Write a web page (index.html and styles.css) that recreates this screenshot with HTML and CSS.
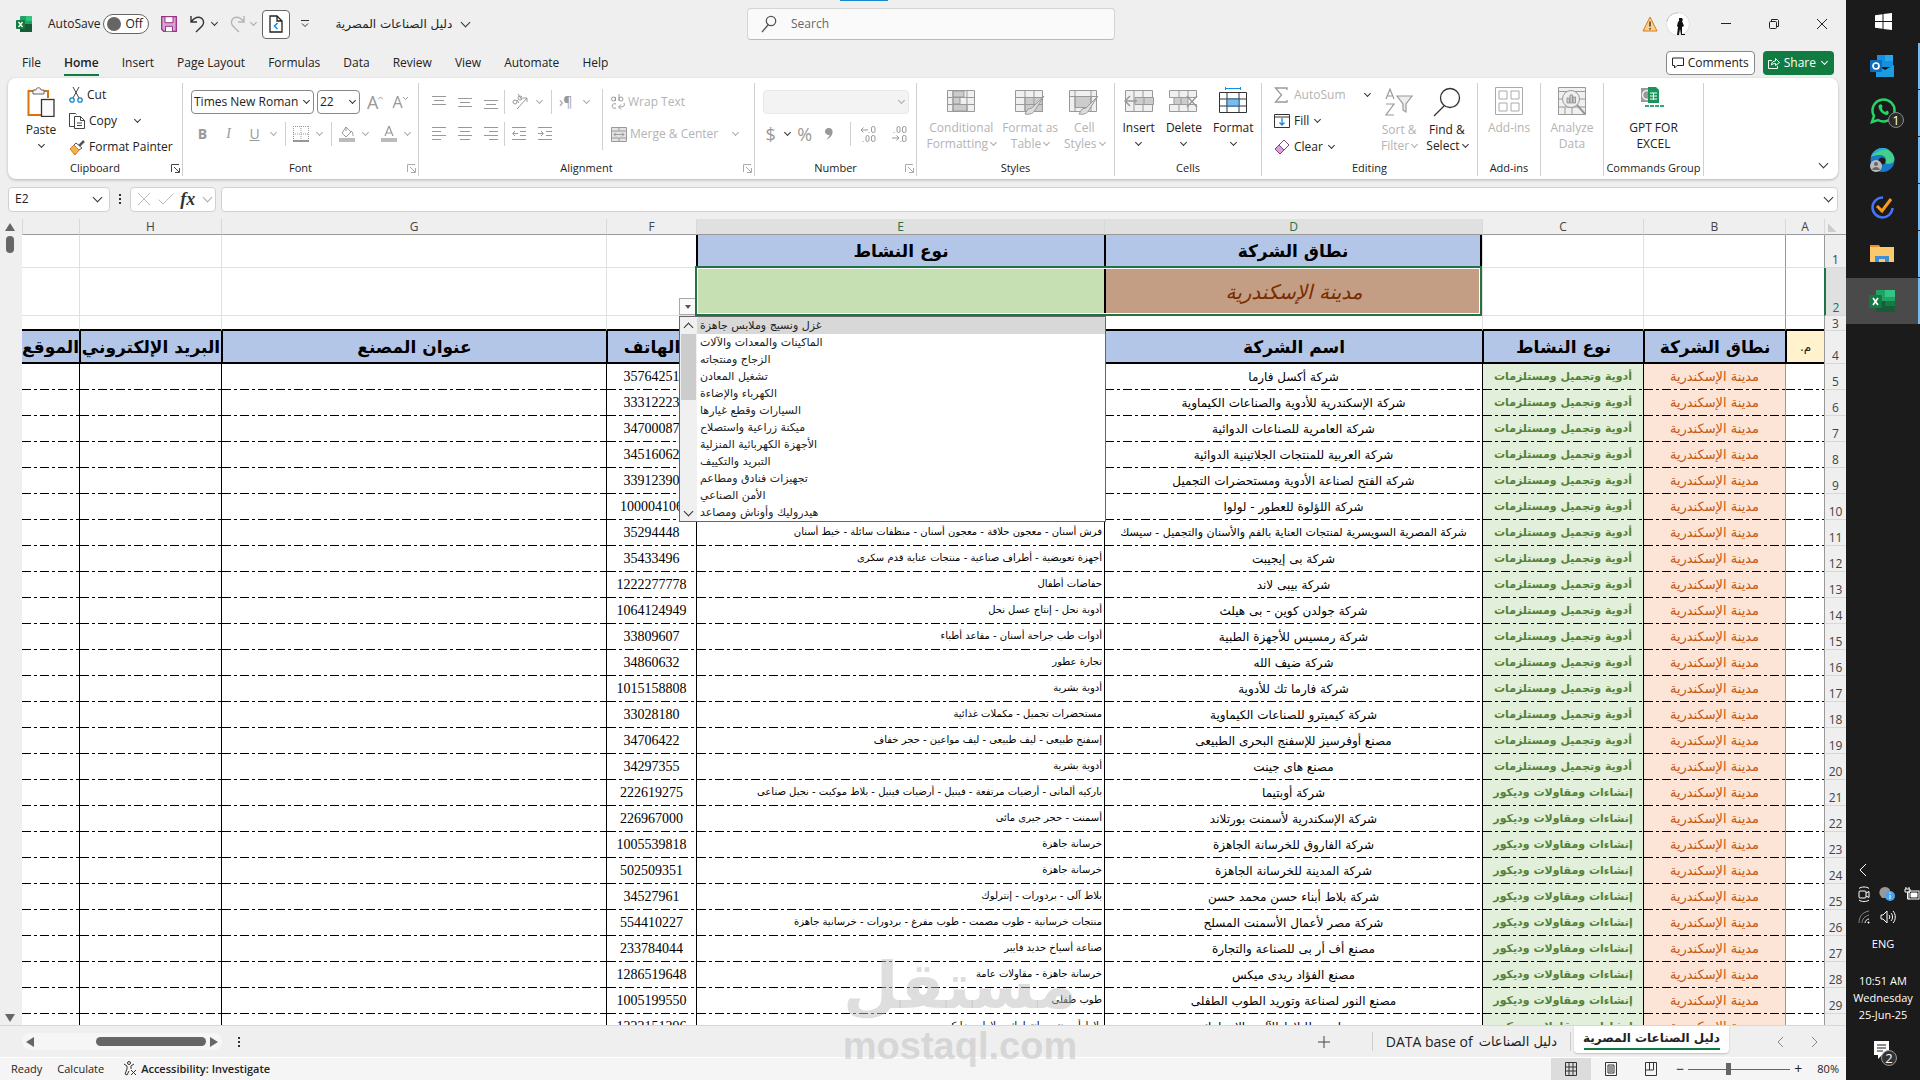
FILE: index.html
```html
<!DOCTYPE html>
<html lang="en">
<head>
  <meta charset="UTF-8" />
  <meta name="viewport" content="width=device-width, initial-scale=1.0"/>
  <title>دليل الصناعات المصرية</title>
  <link rel="stylesheet" href="styles.css">
</head>
<body>
  <div class="window">
    <header class="titlebar">
      <div class="quick">
        <svg class="xl" width="16" height="16" viewBox="0 0 16 16"><rect x="4" y="0" width="12" height="16" rx="1" fill="#21a366"/><rect x="10" y="0" width="6" height="5" fill="#33c481"/><rect x="4" y="8" width="12" height="8" fill="#185c37"/><rect x="0" y="4" width="9" height="9" rx="1" fill="#107c41"/><path d="M2.500 6l4 5M6.500 6l-4 5" stroke="#fff" stroke-width="1.300"/></svg>
        <label for="autosave">AutoSave</label>
        <span class="toggle"><input type="checkbox" id="autosave"><span>Off</span></span>
        <button class="ic save" aria-label="Save"><svg width="16" height="16" viewBox="0 0 16 16"><path d="M.7.700h14.600v14.600H2.700l-2-2z" fill="#d6a5d6" stroke="#9b2f84" stroke-width="1.300"/><path d="M4 .7h8v6H4zM4.500 15.300v-5h7v5" fill="#fff" stroke="#9b2f84"/></svg></button>
        <button class="ic undo" aria-label="Undo"><svg width="16" height="18" viewBox="0 0 16 18" fill="none" stroke="#333" stroke-width="1.400"><path d="M1 1v6h6M1.500 6.500C4 3 6 2 9 2.200c4 .5 6 5 3.500 8.300L6 17"/></svg><i class="chev"></i></button>
        <button class="ic redo" aria-label="Redo"><svg width="16" height="18" viewBox="0 0 16 18" fill="none" stroke="#b5b5b5" stroke-width="1.400"><path d="M15 1v6H9M14.500 6.500C12 3 10 2 7 2.200c-4 .5-6 5-3.500 8.300L10 17"/></svg><i class="chev dim"></i></button>
        <button class="ic boxed" aria-label="Sheet right to left"><svg width="14" height="18" viewBox="0 0 14 18" fill="none" stroke="#222" stroke-width="1.300"><path d="M1 1h7l5 5v11H1zM8 1v5h5"/><path d="M8.500 8l-3 3 3 3" stroke="#1490df" stroke-width="1.600"/></svg></button>
        <button class="ic custom" aria-label="Customize toolbar"><svg width="8" height="8" viewBox="0 0 8 8" fill="none" stroke="#333"><path d="M0 .5h8M1 3.500l3 3 3-3"/></svg></button>
        <button class="ic filename"><span class="ar">دليل الصناعات المصرية</span><i class="chev big"></i></button>
      </div>
      <label class="search"><svg width="16" height="18" viewBox="0 0 16 18" fill="none" stroke="#555" stroke-width="1.300"><circle cx="10" cy="6" r="4.700"/><path d="M7 10l-6 7"/></svg><input type="text" placeholder="Search" aria-label="Search"></label>
      <div class="caption">
        <svg width="16" height="16" viewBox="0 0 16 16"><path d="M8 1l7 14H1z" fill="#fbd28b" stroke="#d97a16"/><path d="M8 5.500v5M8 12v1.500" stroke="#333" stroke-width="1.400"/></svg>
        <svg class="avatar" width="24" height="24" viewBox="0 0 24 24"><circle cx="12" cy="12" r="11.500" fill="#fff" stroke="#ddd"/><path d="M1 9A11 11 0 0 1 12 1" stroke="#8cc" fill="none" stroke-dasharray="2 1"/><path d="M13 6h3l1 2-1 1 2 5-2 1v7h3v1h-4l-1-6-1 6h-2l1-8-1-1 1-4 1-1z" fill="#111"/></svg>
        <button class="ic" aria-label="Minimize"><svg width="12" height="12" viewBox="0 0 12 12"><path d="M1 5.500h10" stroke="#222"/></svg></button>
        <button class="ic" aria-label="Restore"><svg width="12" height="12" viewBox="0 0 12 12" fill="none" stroke="#222"><rect x="1.500" y="3.500" width="7" height="7" rx="1"/><path d="M3.500 3V1.500h6l1 1v6H9"/></svg></button>
        <button class="ic" aria-label="Close"><svg width="12" height="12" viewBox="0 0 12 12" stroke="#222"><path d="M1 1l10 10M11 1L1 11"/></svg></button>
      </div>
    </header>

    <nav class="tabs">
      <a href="#">File</a><a href="#" class="on">Home</a><a href="#">Insert</a><a href="#">Page Layout</a><a href="#">Formulas</a><a href="#">Data</a><a href="#">Review</a><a href="#">View</a><a href="#">Automate</a><a href="#">Help</a>
      <button class="comments"><svg width="12" height="12" viewBox="0 0 12 12" fill="none" stroke="#222"><path d="M.5 1h11v7.500H5L2.500 11V8.500h-2z"/></svg>Comments</button>
      <button class="share"><svg width="12" height="12" viewBox="0 0 12 12" fill="none" stroke="#fff"><path d="M4 3.500H.5v8h9V9M3.500 8c0-3 2-4 4-4V1.500l4 4-4 3V6.500c-2 0-3 .5-4 1.500z"/></svg>Share<i class="chev white"></i></button>
    </nav>

    <section class="ribbon">
      <div class="group clipboard">
        <div class="tools">
          <button class="tall paste"><svg width="28" height="30" viewBox="0 0 28 30" fill="none"><path d="M6 4H1.500v24H14M17 4h4v7" stroke="#d9730d" stroke-width="2"/><path d="M6 7V3h3c0-3 5-3 5 0h3v4z" fill="#f5f5f5" stroke="#666"/><rect x="14.500" y="12.500" width="12.500" height="17" fill="#fafafa" stroke="#333" stroke-width="1.300"/></svg><span>Paste</span><i class="chev"></i></button>
          <div class="stack">
            <button class="small"><svg width="14" height="16" viewBox="0 0 14 16" fill="none"><path d="M4 0l6 11M10 0L4 11" stroke="#444"/><circle cx="3" cy="13" r="2.200" stroke="#1a86d0" stroke-width="1.300"/><circle cx="11" cy="13" r="2.200" stroke="#1a86d0" stroke-width="1.300"/></svg>Cut</button>
            <button class="small copy"><svg width="16" height="16" viewBox="0 0 16 16" fill="none" stroke="#444"><path d="M5.500 13.500H.5V.5h6l1 1M5.500 3.500h6l4 4v8h-10zM11.500 3.500v4h4M8 10h5M8 12.500h5"/></svg>Copy<i class="chev"></i></button>
            <button class="small"><svg width="16" height="15" viewBox="0 0 16 15"><path d="M15 1l-5 5" stroke="#555" stroke-width="2.500"/><path d="M7 3l6 5-3 2-5-5z" fill="#fff" stroke="#555"/><path d="M5 5l5 5-4 5-5-6z" fill="#f4b056" stroke="#d97a16"/></svg>Format Painter</button>
          </div>
        </div>
        <div class="name">Clipboard<svg class="launch" width="9" height="9" viewBox="0 0 9 9"><path d="M.5 8V.5H8M3 3l5 5M8.500 4v4.500H4"/></svg></div>
      </div>

      <div class="group font">
        <div class="rows">
          <div class="line">
            <span class="pick"><select class="family" aria-label="Font"><option>Times New Roman</option></select><i class="chev"></i></span>
            <span class="pick"><select class="size" aria-label="Font size"><option>22</option></select><i class="chev"></i></span>
            <button class="ic off" aria-label="Grow font"><span class="glyph">A</span><svg class="tick" width="5" height="12" viewBox="0 0 5 12"><path d="M0 3.500L2.500 1 5 3.500"/></svg></button>
            <button class="ic off" aria-label="Shrink font"><span class="glyph s">A</span><svg class="tick" width="5" height="12" viewBox="0 0 5 12"><path d="M0 1l2.500 2.500L5 1"/></svg></button>
          </div>
          <div class="line second">
            <button class="ic off w26"><b>B</b></button><button class="ic off w26"><em>I</em></button><button class="ic off w26"><u>U</u></button><i class="chev dim"></i><hr>
            <button class="ic off pad" aria-label="Borders"><svg width="16" height="16" viewBox="0 0 16 16" stroke="#999" fill="none"><path d="M.5 0v15M15.500 0v15M8 0v15M0 .5h16M0 8h16" stroke-dasharray="1 1"/><path d="M0 15h16" stroke="#777" stroke-width="1.500"/></svg></button><i class="chev dim"></i><hr>
            <button class="ic off pad" aria-label="Fill color"><svg width="16" height="16" viewBox="0 0 16 16" fill="none" stroke="#999"><path d="M7 1l5 5-5 5-4-4zM7 1v4M12 5c2 1 2 3 2 5"/><path d="M0 14h16" stroke="#bbb" stroke-width="4"/></svg></button><i class="chev dim"></i>
            <button class="ic off pad wide" aria-label="Font color"><svg width="16" height="16" viewBox="0 0 16 16" fill="none" stroke="#999"><path d="M4 10l4-10 4 10M5.500 7h5" stroke-width="1.200"/><path d="M0 14h16" stroke="#bbb" stroke-width="4"/></svg></button><i class="chev dim"></i>
          </div>
        </div>
        <div class="name">Font<svg class="launch dim" width="9" height="9" viewBox="0 0 9 9"><path d="M.5 8V.5H8M3 3l5 5M8.500 4v4.500H4"/></svg></div>
      </div>

      <div class="group align">
        <div class="tools">
          <div class="rows">
            <div class="line">
              <svg class="ln" width="14" height="14" viewBox="0 0 14 14"><path d="M0 1.500h14M2 5.500h10M0 9.500h14"/></svg>
              <svg class="ln" width="14" height="14" viewBox="0 0 14 14"><path d="M0 3.500h14M2 7.500h10M0 11.500h14"/></svg>
              <svg class="ln" width="14" height="14" viewBox="0 0 14 14"><path d="M0 5.500h14M2 9.500h10M0 13.500h14"/></svg><hr>
              <svg class="ln thin" width="16" height="16" viewBox="0 0 16 16"><circle cx="3" cy="8" r="2"/><circle cx="8" cy="4" r="2"/><path d="M5 6l2 3M6 0l4 6M5 15L15 4M11 4h4v4"/></svg><i class="chev dim"></i><hr>
              <span class="off para">›¶</span><i class="chev dim"></i>
            </div>
            <div class="line second">
              <svg class="ln" width="14" height="14" viewBox="0 0 14 14"><path d="M0 .5h14M0 4.500h9M0 8.500h14M0 12.500h9"/></svg>
              <svg class="ln" width="14" height="14" viewBox="0 0 14 14"><path d="M0 .5h14M2 4.500h10M0 8.500h14M2 12.500h10"/></svg>
              <svg class="ln" width="14" height="14" viewBox="0 0 14 14"><path d="M0 .5h14M5 4.500h9M0 8.500h14M5 12.500h9"/></svg><hr>
              <svg class="ln" width="14" height="14" viewBox="0 0 14 14"><path d="M0 .5h14M8 4.500h6M8 8.500h6M0 12.500h14M6 6.500H1M3 4L.7 6.500 3 9"/></svg>
              <svg class="ln last" width="14" height="14" viewBox="0 0 14 14"><path d="M0 .5h14M8 4.500h6M8 8.500h6M0 12.500h14M0 6.500h5M3 4l2.300 2.500L3 9"/></svg>
            </div>
          </div>
          <hr class="tallrule">
          <div class="wrap">
            <button class="small off"><svg width="14" height="16" viewBox="0 0 14 16" fill="none" stroke="#999"><circle cx="2.500" cy="5" r="2"/><path d="M4.500 3v4M8 0v7"/><circle cx="10" cy="5" r="2"/><path d="M5 10c-5-2-5 6 0 4M13 9c1 3 0 4-5 4M10 10.500L7.500 13l2.500 2.500"/></svg>Wrap Text</button>
            <button class="small off"><svg width="16" height="15" viewBox="0 0 16 15" fill="#e4e4e4" stroke="#999"><path d="M.5.500h15v14H.5zM.5 4h15M.5 11h15M8 .5V4M8 11v3.500"/><path d="M3 7.500h10M5 5.500l-2 2 2 2M11 5.500l2 2-2 2" fill="none"/></svg>Merge &amp; Center<i class="chev dim"></i></button>
          </div>
        </div>
        <div class="name">Alignment<svg class="launch dim" width="9" height="9" viewBox="0 0 9 9"><path d="M.5 8V.5H8M3 3l5 5M8.500 4v4.500H4"/></svg></div>
      </div>

      <div class="group number">
        <div class="rows">
          <div class="line"><span class="pick"><select class="format" aria-label="Number format" disabled><option></option></select><i class="chev dim"></i></span></div>
          <div class="line second">
            <span class="off sign">$</span><i class="chev"></i><span class="off sign">%</span><svg class="comma" width="8" height="16" viewBox="0 0 8 16"><path d="M4 2a3.500 3.500 0 1 0 .5 6.800C4 11 3 12 1 13.500 6 12 8 8 7.500 5 7 3 6 2 4 2z"/></svg><hr>
            <svg class="ln dec" width="16" height="16" viewBox="0 0 16 16"><path d="M1 4h7M3.500 1.500L1 4l2.500 2.500M9 6v1M3 15v1"/><rect x="11.500" y=".5" width="3.500" height="6" rx="1.500"/><rect x="6" y="9.500" width="3" height="6" rx="1.500"/><rect x="11.500" y="9.500" width="3.500" height="6" rx="1.500"/></svg>
            <svg class="ln last" width="16" height="16" viewBox="0 0 16 16"><path d="M1 12h7M5.500 9.500L8 12l-2.500 2.500M3 6v1M10 15v1"/><rect x="11.500" y="9.500" width="3.500" height="6" rx="1.500"/><rect x="6" y=".5" width="3" height="6" rx="1.500"/><rect x="11.500" y=".5" width="3.500" height="6" rx="1.500"/></svg>
          </div>
        </div>
        <div class="name">Number<svg class="launch dim" width="9" height="9" viewBox="0 0 9 9"><path d="M.5 8V.5H8M3 3l5 5M8.500 4v4.500H4"/></svg></div>
      </div>

      <div class="group styles">
        <div class="tools">
          <button class="tall off"><svg width="28" height="28" viewBox="0 0 28 28" fill="#f0f0f0" stroke="#999"><path d="M.5 3.500h27v21H.5z"/><path d="M6 4h11v6H6zM6 10.500h7V17H6zM6 17.500h14v6.500H6z" fill="#ccc"/><path d="M.5 10.500h27M.5 17.500h27M6 3.500v21M20 3.500v21" fill="none"/></svg><span>Conditional<br>Formatting <i class="chev dim"></i></span></button>
          <button class="tall off"><svg width="30" height="28" viewBox="0 0 30 28" fill="#f0f0f0" stroke="#999"><path d="M.5 3.500h27v21H.5z"/><path d="M10 10.500h17.500v14H10z" fill="#ccc"/><path d="M.5 10.500h27M.5 17.500h27M10 3.500v21M19 3.500v21" fill="none"/><path d="M29 9L17 21l-4 1-3 5c5 1 9-1 10-4z" fill="#ddd"/></svg><span>Format as<br>Table <i class="chev dim"></i></span></button>
          <button class="tall off"><svg width="30" height="28" viewBox="0 0 30 28" fill="#f0f0f0" stroke="#999"><path d="M.5 3.500h27v21H.5z"/><path d="M6 9.500h16v11H6z" fill="#ccc"/><path d="M.5 9.500h27M6 3.500v21M22 3.500v21" fill="none"/><path d="M29 9L17 21l-4 1-3 5c5 1 9-1 10-4z" fill="#ddd"/></svg><span>Cell<br>Styles <i class="chev dim"></i></span></button>
        </div>
        <div class="name">Styles</div>
      </div>

      <div class="group cells">
        <div class="tools">
          <button class="tall"><svg width="30" height="28" viewBox="0 0 30 28" fill="#f0f0f0" stroke="#999"><path d="M1.500 3.500h27v21h-27zM10 3.500v21M19 3.500v21"/><path d="M11 10.500h18.500v7H11zM20 10.500v7" fill="#ccc"/><path d="M1 14h12M6 9l-5 5 5 5" fill="none" stroke-width="1.500"/></svg><span>Insert</span><i class="chev"></i></button>
          <button class="tall"><svg width="30" height="28" viewBox="0 0 30 28" fill="#f0f0f0" stroke="#999"><path d="M.5 3.500h27v7H.5zM.5 17.500h27v7H.5zM10 3.500v7M19 3.500v7M10 17.500v7M19 17.500v7"/><path d="M5 10.500h14v7H5zM12 10.500v7" fill="#ccc"/><path d="M18 9l10 11M28 9L18 20" fill="none" stroke-width="1.500"/></svg><span>Delete</span><i class="chev"></i></button>
          <button class="tall"><svg width="28" height="28" viewBox="0 0 28 28" fill="#fff" stroke="#333"><path d="M.5 5.500h27v20H.5zM.5 12h27M.5 19h27M8 5.500v20M20 5.500v20"/><path d="M8 12h12v7H8z" fill="#7fbbe8" stroke="#1a6fb8"/><path d="M6.500 1.500h15M6.500 0v3M21.500 0v3" stroke="#1490df"/></svg><span>Format</span><i class="chev"></i></button>
        </div>
        <div class="name">Cells</div>
      </div>

      <div class="group editing">
        <div class="tools">
          <div class="stack">
            <button class="small off"><svg width="16" height="16" viewBox="0 0 16 16" fill="none" stroke="#999" stroke-width="1.300"><path d="M13 3V1H1.500l6 7-6 7H13v-2"/></svg>AutoSum<i class="chev"></i></button>
            <button class="small"><svg width="16" height="14" viewBox="0 0 16 14" fill="none" stroke="#333"><path d="M.5.500h15v13H.5zM.5 3h15"/><path d="M8 4v7M5.500 8.500L8 11l2.500-2.500" stroke="#1a86d0" stroke-width="1.300"/></svg>Fill <i class="chev"></i></button>
            <button class="small"><svg width="16" height="16" viewBox="0 0 16 16" stroke="#8f3a84" fill="#fff"><path d="M10 1l5 5-9 9-5-5z"/><path d="M5 6l5 5-4 4-5-5z" fill="#d6a5d6"/></svg>Clear <i class="chev"></i></button>
          </div>
          <button class="tall off"><svg width="30" height="30" viewBox="0 0 30 30" fill="none" stroke="#999" stroke-width="1.200"><path d="M2 12L6 2l4 10M3.500 9h5M2 17h8L2 28h8"/><path d="M13 9h15l-6 8v8l-3-2v-6z" fill="#eee"/></svg><span>Sort &amp;<br>Filter <i class="chev dim"></i></span></button>
          <button class="tall"><svg width="30" height="30" viewBox="0 0 30 30" fill="none" stroke="#333" stroke-width="1.300"><circle cx="18" cy="11" r="9.500"/><path d="M12 19L2 29"/></svg><span>Find &amp;<br>Select <i class="chev"></i></span></button>
        </div>
        <div class="name">Editing</div>
      </div>

      <div class="group narrow">
        <div class="tools"><button class="tall off"><svg width="28" height="28" viewBox="0 0 28 28" fill="none" stroke="#aaa"><path d="M.5.500h27v27H.5zM4 4h8v8H4zM16 4h8v8h-8zM4 16h8v8H4zM16 16h8v8h-8z"/></svg><span>Add-ins</span></button></div>
        <div class="name">Add-ins</div>
      </div>
      <div class="group narrow">
        <div class="tools"><button class="tall off"><svg width="28" height="28" viewBox="0 0 28 28" fill="#f0f0f0" stroke="#999"><path d="M.5.500h27v27H.5z"/><path d="M.5 4.500h27M.5 12h27M.5 20h27M7 20v8M14 20v8"/><circle cx="13" cy="12" r="8.500" fill="#eee"/><path d="M9 11h2.500v5H9zM12 8h2.500v8H12zM15 10h2.500v6H15z" fill="#ccc"/><path d="M19 18l8 9" stroke-width="2"/></svg><span>Analyze<br>Data</span></button></div>
        <div class="name"></div>
      </div>
      <div class="group commands">
        <div class="tools"><button class="tall"><svg width="28" height="28" viewBox="0 0 28 28"><rect x="2" y="1" width="13" height="14" fill="#999"/><circle cx="8" cy="8" r="4.500" fill="none" stroke="#eee" stroke-width="1.500"/><path d="M9 0h8l3 3v13H9z" fill="#18935a"/><path d="M11 6h7M11 9h7M11 12h7M14.500 6v7" stroke="#fff"/><path d="M6 19h20" stroke="#3aa378" stroke-width="2" stroke-dasharray="4 1"/></svg><span>GPT FOR<br>EXCEL</span></button></div>
        <div class="name">Commands Group</div>
      </div>
      <button class="ic collapse" aria-label="Collapse ribbon"><i class="chev big"></i></button>
    </section>

    <div class="formula">
      <label class="namebox"><input type="text" value="E2" aria-label="Name box"><i class="chev big"></i></label>
      <svg width="4" height="12" viewBox="0 0 4 12" fill="#333"><path d="M1 1h2v2H1zM1 5h2v2H1zM1 9h2v2H1z"/></svg>
      <div class="fx">
        <svg width="14" height="14" viewBox="0 0 14 14" stroke="#bbb" fill="none"><path d="M1 1l12 12M13 1L1 13"/></svg>
        <svg width="16" height="12" viewBox="0 0 16 12" stroke="#bbb" fill="none"><path d="M.5 6.500L5 11 15.500.5"/></svg>
        <button class="ic">fx</button><i class="chev big dim"></i>
      </div>
      <label class="entry"><input type="text" aria-label="Formula bar"><i class="chev big"></i></label>
    </div>

    <main class="sheet">
      <div class="vscroll"><i class="up"></i><i class="thumb"></i><i class="down"></i></div>
      <div class="viewport">
        <table dir="rtl">
          <colgroup><col class="c-num"><col class="c-a"><col class="c-b"><col class="c-c"><col class="c-d"><col class="c-e"><col class="c-f"><col class="c-g"><col class="c-h"><col class="c-i"></colgroup>
          <thead>
            <tr><th class="corner"></th><th>A</th><th>B</th><th>C</th><th class="sel">D</th><th class="sel">E</th><th>F</th><th>G</th><th>H</th><th></th></tr>
          </thead>
          <tbody id="rows">
            <tr class="r1"><th>1</th><td class="pane"></td><td></td><td></td><td class="head">نطاق الشركة</td><td class="head">نوع النشاط</td><td></td><td></td><td></td><td></td></tr>
            <tr class="r2"><th class="sel">2</th><td class="pane"></td><td></td><td></td><td class="scope">مدينة الإسكندرية<div class="selection"></div></td>
              <td class="kind">
                <button class="arrow" aria-label="Open list"><i class="down"></i></button>
                <div class="list">
                  <div class="bar"><i class="chev big flip"></i><i class="thumb"></i><i class="chev big"></i></div>
                  <select size="12" aria-label="نوع النشاط">
                    <option class="active">غزل ونسيج وملابس جاهزة</option>
                    <option>الماكينات والمعدات والآلات</option>
                    <option>الزجاج ومنتجاته</option>
                    <option>تشغيل المعادن</option>
                    <option>الكهرباء والإضاءة</option>
                    <option>السيارات وقطع غيارها</option>
                    <option>ميكنة زراعية واستصلاح</option>
                    <option>الأجهزة الكهربائية المنزلية</option>
                    <option>التبريد والتكييف</option>
                    <option>تجهيزات فنادق ومطاعم</option>
                    <option>الأمن الصناعي</option>
                    <option>هيدروليك وأوناش ومصاعد</option>
                  </select>
                </div>
              </td><td></td><td></td><td></td><td></td></tr>
            <tr class="r3"><th>3</th><td class="pane"></td><td></td><td></td><td></td><td></td><td></td><td></td><td></td><td></td></tr>
            <tr class="r4"><th>4</th><td class="mark">م.</td><td class="head">نطاق الشركة</td><td class="head">نوع النشاط</td><td class="head">اسم الشركة</td><td class="head"></td><td class="head">الهاتف</td><td class="head">عنوان المصنع</td><td class="head">البريد الإلكتروني</td><td class="head">الموقع</td></tr>
          </tbody>
        </table>
      </div>
    </main>

    <div class="sheets">
      <div class="hscroll"><i class="left"></i><i class="thumb"></i><i class="right"></i></div>
      <svg class="dots" width="4" height="12" viewBox="0 0 4 12" fill="#333"><path d="M1 1h2v2H1zM1 5h2v2H1zM1 9h2v2H1z"/></svg>
      <button class="ic add" aria-label="New sheet"><svg width="12" height="12" viewBox="0 0 12 12" stroke="#444"><path d="M6 0v12M0 6h12"/></svg></button>
      <button class="tab">DATA base of <span class="ar">دليل الصناعات</span></button>
      <button class="tab on"><span class="ar">دليل الصناعات المصرية</span></button>
      <div class="move"><svg width="8" height="12" viewBox="0 0 8 12"><path d="M6 1L1 6l5 5"/></svg><svg width="8" height="12" viewBox="0 0 8 12"><path d="M2 1l5 5-5 5"/></svg></div>
    </div>

    <footer class="status">
      <span>Ready</span><span>Calculate</span>
      <span class="access"><svg width="14" height="15" viewBox="0 0 14 15" fill="none" stroke="#333"><circle cx="6" cy="2" r="1.500"/><path d="M1 3l3 2v3l-2 5 2 1 2-4M11 3L8 5v3M8 9l5 5M13 9l-5 5"/></svg>Accessibility: Investigate</span>
      <div class="views">
        <button class="ic on" aria-label="Normal"><svg width="12" height="14" viewBox="0 0 12 14"><path d="M.5.500h11v13H.5zM.5 5h11M.5 9h11M4 .5v13M8 .5v13"/></svg></button>
        <button class="ic" aria-label="Page layout"><svg width="12" height="14" viewBox="0 0 12 14"><path d="M.5.500h11v13H.5zM3 3h6v8H3zM4 5h4M4 7h4M4 9h4"/></svg></button>
        <button class="ic" aria-label="Page break"><svg width="12" height="14" viewBox="0 0 12 14"><path d="M.5.500h11v13H.5zM.5 8h8V.5M4.500 .5V8"/></svg></button>
      </div>
      <span class="zoom">−<input type="range" min="0" max="100" value="39" aria-label="Zoom">+</span>
      <span class="pct">80%</span>
    </footer>
    <div class="watermark"><span class="word">مستقل</span><span class="site">mostaql.com</span></div>
  </div>

  <aside class="taskbar">
    <div class="apps">
      <button aria-label="Start"><svg width="17" height="17" viewBox="0 0 17 17" fill="#fff"><path d="M0 2.300L7.500 1.200V8H0zM8.500 1L17 0v8H8.500zM0 9h7.500v6.800L0 14.700zM8.500 9H17v8l-8.500-1.100z"/></svg></button>
      <button class="run" aria-label="Outlook"><svg width="24" height="22" viewBox="0 0 24 22"><rect x="7" y="0" width="16" height="12" fill="#1490df"/><rect x="15" y="0" width="8" height="6" fill="#28a8ea"/><path d="M6 10l9 5 9-5v12H6z" fill="#1b9de2"/><rect x="0" y="5" width="12" height="12" rx="1" fill="#0f6cbd"/><circle cx="6" cy="11" r="3" fill="none" stroke="#fff" stroke-width="1.700"/></svg></button>
      <button class="run" aria-label="WhatsApp"><svg class="wa" width="34" height="32" viewBox="0 0 34 32"><path d="M2 25l2-6A11 11 0 1 1 8 23z" fill="none" stroke="#25d366" stroke-width="2.500"/><path d="M9 8c-2 3 3 10 8 10 2 0 2-3 1-4-2-1-2 1-3 1-2-1-3-3-3-4s1-1 0-3c-1-1-2-1-3 0z" fill="#25d366"/><circle cx="26" cy="23" r="7.500" fill="#2b2b2b" stroke="#888"/><text x="26" y="28" fill="#fff" font-family="Open Sans" font-size="13" text-anchor="middle">1</text></svg></button>
      <button class="run" aria-label="Edge"><svg width="25" height="25" viewBox="0 0 25 25"><circle cx="12.500" cy="12" r="12" fill="#1a78c8"/><path d="M1 9C4-1 20-3 24 9c2 7-6 8-9 6 3-5-1-8-5-8-4 0-8 1-9 2z" fill="#43d08a"/><path d="M1 9C4-1 15-2 19 2 12 1 5 4 1 9z" fill="#2aa9dd"/><circle cx="12" cy="13" r="3.500" fill="#1c1c1c"/><circle cx="6" cy="18" r="6" fill="#bbb"/><circle cx="6" cy="16" r="2" fill="#666"/><path d="M2 22c1-4 7-4 8 0z" fill="#666"/></svg></button>
      <button class="run" aria-label="Tasks"><svg width="23" height="23" viewBox="0 0 23 23" fill="none"><path d="M12 1.500A10 10 0 1 0 21.500 12" stroke="#4772fa" stroke-width="2.500"/><path d="M6 10l5 5 9-12" stroke="#f79b1e" stroke-width="3"/></svg></button>
      <button class="run" aria-label="Explorer"><svg width="24" height="20" viewBox="0 0 24 20"><path d="M0 1h9l2 3H0z" fill="#e8912d"/><rect x="0" y="3" width="24" height="15" fill="#fbc96b"/><path d="M5 18v-6h14v6h-4v-3H9v3z" fill="#3d8fd8"/></svg></button>
      <button class="run on" aria-label="Excel"><svg width="26" height="22" viewBox="0 0 26 22"><rect x="7" y="0" width="19" height="22" rx="1" fill="#21a366"/><rect x="16" y="0" width="10" height="7" fill="#33c481"/><rect x="7" y="11" width="19" height="11" fill="#185c37"/><rect x="16" y="11" width="10" height="5" fill="#107c41"/><rect x="0" y="5" width="13" height="13" rx="1" fill="#107c41"/><path d="M4 8l5 7M9 8l-5 7" stroke="#fff" stroke-width="1.700"/></svg></button>
    </div>
    <div class="tray">
      <svg width="8" height="14" viewBox="0 0 8 14"><path d="M7 1L1 7l6 6"/></svg>
      <div class="icons">
        <svg width="12" height="16" viewBox="0 0 12 16"><rect x="1" y="5" width="7" height="7" rx="1"/><path d="M8 7l3-1.500v6L8 10M1 2.500c2-2 8-2 10 0M1 14c2 2 8 2 10 0"/></svg>
        <svg width="18" height="16" viewBox="0 0 18 16"><path d="M2 9a5 5 0 0 1 10-5v8H4z" fill="#999" stroke="none"/><circle cx="12" cy="10" r="5" fill="#4aa3ee" stroke="none"/><path d="M12 6.500V8M12 9v4"/></svg>
        <svg width="16" height="14" viewBox="0 0 16 14"><rect x="5" y="4" width="10" height="8" /><path d="M7 6h6v4H7z" fill="#fff"/><path d="M1 2h5v3H1zM2 0v2M5 0v2M3.500 5v7H5"/></svg>
      </div>
      <div class="icons two">
        <svg width="12" height="14" viewBox="0 0 12 14"><path d="M1 13C1 6 5 2 11 1M4 13c0-4 3-7 7-8" stroke="#888"/><path d="M7 13c0-2 2-4 4-4M10 12h1v1h-1z"/></svg>
        <svg width="16" height="14" viewBox="0 0 16 14"><path d="M1 5h2l4-4v12L3 9H1zM9 5c1 1 1 3 0 4M11 3c2 2 2 6 0 8M13 1c3 3 3 9 0 12"/></svg>
      </div>
      <span class="lang">ENG</span>
      <div class="clock">10:51 AM<br>Wednesday<br>25-Jun-25</div>
      <svg class="note" width="26" height="28" viewBox="0 0 26 28"><path d="M1 1h15v14H9l-4 4v-4H1z" fill="#fff" stroke="none"/><path d="M4 5h9M4 8h9M4 11h6" stroke="#1b1b1b"/><circle cx="16" cy="18" r="7.500" fill="#333" stroke="#999"/><text x="16" y="23" fill="#fff" stroke="none" font-family="Open Sans" font-size="13" text-anchor="middle">2</text></svg>
    </div>
  </aside>
  <script src="script.js"></script>
</body>
</html>
```
FILE: script.js
```js
const PHARMA = "أدوية وتجميل ومستلزمات";
const BUILD = "إنشاءات ومقاولات وديكور";

// company name, activity, phone
const companies = [
  ["شركة أكسل فارما", "", "35764251"],
  ["شركة الإسكندرية للأدوية والصناعات الكيماوية", "", "33312223"],
  ["شركة العامرية للصناعات الدوائية", "", "34700087"],
  ["شركة العربية للمنتجات الجلاتينية الدوائية", "", "34516062"],
  ["شركة الفتح لصناعة الأدوية ومستحضرات التجميل", "", "33912390"],
  ["شركة اللؤلوة للعطور - لولوا", "", "100004106"],
  ["شركة المصرية السويسرية لمنتجات العناية بالفم والأسنان والتجميل - سيسك", "فرش أسنان - معجون حلاقة - معجون أسنان - منظفات سائلة - خيط أسنان", "35294448"],
  ["شركة بى إيجيبت", "أجهزة تعويضية - أطراف صناعية - منتجات عناية قدم سكرى", "35433496"],
  ["شركة بيبى لاند", "حفاضات أطفال", "1222277778"],
  ["شركة جولدن كوين - بى هيلث", "أدوية نحل - إنتاج عسل نحل", "1064124949"],
  ["شركة رمسيس للأجهزة الطبية", "أدوات طب جراحة أسنان - مقاعد أطباء", "33809607"],
  ["شركة ضيف الله", "تجارة عطور", "34860632"],
  ["شركة فارما تك للأدوية", "أدوية بشرية", "1015158808"],
  ["شركة كيميترو للصناعات الكيماوية", "مستحضرات تجميل - مكملات غذائية", "33028180"],
  ["مصنع أوفرسيز للإسفنج البحرى الطبيعى", "إسفنج طبيعى - ليف طبيعى - ليف مواعين - حجر خفاف", "34706422"],
  ["مصنع هاى جينت", "أدوية بشرية", "34297355"],
  ["شركة أوبتيما", "باركيه ألمانى - أرضيات مرتفعة - فينيل - أرضيات فينيل - بلاط موكيت - نجيل صناعى", "222619275"],
  ["شركة الإسكندرية لأسمنت بورتلاند", "أسمنت - حجر جيرى مائى", "226967000"],
  ["شركة الفاروق للخرسانة الجاهزة", "خرسانة جاهزة", "1005539818"],
  ["شركة المدينة للخرسانة الجاهزة", "خرسانة جاهزة", "502509351"],
  ["شركة بلاط أبناء حسن محمد حسن", "بلاط آلى - بردورات - إنترلوك", "34527961"],
  ["شركة مصر لأعمال الأسمنت المسلح", "منتجات خرسانية - طوب مصمت - طوب مفرغ - بردورات - خرسانية جاهزة", "554410227"],
  ["مصنع أف أر بى للصناعة والتجارة", "صناعة أسياخ حديد فايبر", "233784044"],
  ["مصنع الفؤاد ريدى ميكس", "خرسانة جاهزة - مقاولات عامة", "1286519648"],
  ["مصنع النور لصناعة وتوريد الطوب الطفلى", "طوب طفلى", "1005199550"],
  ["مصنع بيراميدز للبلاط الآلى والإنترلوك", "بلاط أسمنتى - إنترلوك - بلاط موزايكو", "1222151296"]
];

document.getElementById("rows").insertAdjacentHTML("beforeend", companies.map(function (c, i) {
  // long names shrink to fit the column
  var fit = c[0].length > 60 ? " shrink" : "";
  return '<tr class="data"><th>' + (i + 5) + '</th><td class="pane"></td><td class="city">مدينة الإسكندرية</td><td class="type">' +
    (i < 16 ? PHARMA : BUILD) + '</td><td class="company' + fit + '">' + c[0] + '</td><td class="work">' + c[1] +
    '</td><td class="phone">' + c[2] + '</td><td></td><td></td><td class="end"></td></tr>';
}).join(""));
```
FILE: styles.css
```css
* { box-sizing: border-box; }
body {
  margin: 0;
  height: 100vh;
  display: flex;
  overflow: hidden;
  font: 12px/16px "Open Sans", "DejaVu Sans", sans-serif;
  color: #222;
  background: #efefef;
}
button, input, select { font: inherit; color: inherit; margin: 0; }
button { background: none; border: 0; padding: 0; }
svg { flex: none; display: block; }
.window {
  flex: 1;
  min-width: 0;
  display: flex;
  flex-direction: column;
  position: relative;
}
.ic { display: flex; align-items: center; gap: 8px; }
.ar { font-family: "DejaVu Sans", sans-serif; font-size: 12px; }
.off { color: #b3b3b3; }
.chev {
  display: inline-block;
  flex: none;
  width: 5px;
  height: 5px;
  border: solid #333;
  border-width: 0 1px 1px 0;
  transform: rotate(45deg);
  margin: 0 2px 3px;
}
.chev.dim { border-color: #aaa; }
.chev.white { border-color: #fff; }
.chev.big { width: 7px; height: 7px; }
.chev.flip { transform: rotate(225deg); margin: 3px 0 0; }

/* title bar */
.titlebar {
  height: 48px;
  display: flex;
  align-items: center;
  justify-content: space-between;
  background: linear-gradient(#1a86d0, #1a86d0) 840px 0 / 48px 1px no-repeat;
}
.quick { flex: 1; display: flex; align-items: center; padding-left: 16px; }
.xl { margin-right: 16px; }
.toggle {
  width: 46px;
  height: 20px;
  margin: 0 12px 0 3px;
  border: 1px solid #666;
  border-radius: 10px;
  background: #fff;
  display: flex;
  align-items: center;
  gap: 4px;
  padding: 0 3px;
}
.toggle input { appearance: none; margin: 0; width: 14px; height: 14px; border-radius: 7px; background: #666; }
.save { margin-right: 13px; }
.undo, .redo { gap: 4px; }
.undo { margin-right: 10px; }
.redo { margin-right: 4px; }
.boxed {
  width: 28px;
  height: 29px;
  justify-content: center;
  border: 1px solid #666;
  border-radius: 4px;
  background: #fff;
}
.custom { margin: 0 26px 0 11px; }
.search {
  width: 368px;
  height: 32px;
  display: flex;
  align-items: center;
  gap: 12px;
  margin-left: 18px;
  padding: 0 13px;
  background: #fafafa;
  border: 1px solid #d4d4d4;
  border-bottom-color: #bbb;
  border-radius: 4px;
}
.search input { flex: 1; border: 0; background: none; }
.search input::placeholder { color: #666; }
.caption { flex: 1; display: flex; align-items: center; justify-content: flex-end; gap: 36px; padding-right: 18px; }
.caption .avatar { margin: 0 -6px 0 -28px; }

/* tabs */
.tabs { height: 30px; display: flex; align-items: center; gap: 23px; padding: 0 12px 0 22px; }
.tabs a { color: #222; text-decoration: none; padding: 4px 0 3px; border-bottom: 2px solid transparent; }
.tabs .on { font-weight: 600; border-color: #107c41; }
.comments, .share { height: 24px; display: flex; align-items: center; gap: 4px; border-radius: 4px; }
.comments { margin-left: auto; padding: 0 5px; border: 1px solid #888; background: #fff; }
.share { margin-left: -15px; padding: 0 5px; background: #107c41; color: #fff; }

/* ribbon */
.ribbon {
  height: 101px;
  flex: none;
  margin: 0 8px;
  display: flex;
  background: #fff;
  border-radius: 8px;
  box-shadow: 0 1px 3px rgba(0, 0, 0, .25);
  padding: 5px 0 3px;
}
.group { flex: none; display: flex; flex-direction: column; border-right: 1px solid #d0d0d0; }
.clipboard { width: 175px; }
.font { width: 236px; }
.align { width: 336px; }
.number { width: 162px; }
.styles { width: 198px; }
.cells { width: 147px; }
.editing { width: 216px; }
.narrow { width: 63px; }
.commands { width: 100px; }
.tools { flex: 1; display: flex; justify-content: center; }
.name { height: 16px; font-size: 11px; text-align: center; position: relative; white-space: nowrap; }
.launch { position: absolute; right: 2px; top: 4px; fill: none; stroke: #444; }
.launch.dim { stroke: #aaa; }
.tall { display: flex; flex-direction: column; align-items: center; padding-top: 4px; }
.tall svg { margin-bottom: 5px; }
.tall .chev { margin-top: 4px; }
.tall span .chev { margin: 0 0 3px; }
.paste { width: 48px; margin-left: 9px; }
.stack { display: flex; flex-direction: column; gap: 10px; padding-top: 4px; }
.small { display: flex; align-items: center; gap: 4px; height: 16px; white-space: nowrap; }
.clipboard .stack { flex: 1; padding-left: 4px; }
.copy .chev { margin-left: 14px; }
.rows { flex: 1; }
.line { display: flex; align-items: center; height: 24px; margin-top: 7px; gap: 3px; }
.line.second { margin-top: 8px; }
.line hr, .tallrule { border: 0; width: 1px; height: 24px; margin: 0 4px; background: #d0d0d0; }
.tallrule { height: 61px; margin-top: 6px; }
.font .rows { padding-left: 8px; }
.pick { position: relative; display: flex; }
.pick select {
  appearance: none;
  height: 24px;
  padding: 0 2px;
  border: 1px solid #888;
  border-radius: 4px;
  background: #fff;
}
.pick .chev { position: absolute; right: 3px; top: 8px; }
.pick .family { width: 123px; }
.pick .size { width: 43px; }
.pick .format { width: 146px; border-color: #ddd; background: #efefef; }
.line .ic { gap: 0; }
.glyph { font-size: 18px; margin-left: 4px; color: #999; }
.glyph.s { font-size: 16px; margin-left: 6px; }
.tick { fill: none; stroke: #999; }
.off b, .off em, .off u { font-size: 14px; color: #999; }
.off em { font-family: "Liberation Serif", serif; }
.w26 { width: 23px; justify-content: center; }
.pad { padding-right: 3px; }
.wide { padding-left: 8px; }
.ln { fill: none; stroke: #999; margin-right: 9px; }
.ln + hr { margin-left: -6px; }
.thin { margin-right: 4px; }
.para { width: 20px; font-size: 14px; color: #999; }
.align .rows { flex: none; width: 179px; padding-left: 13px; }
.wrap { flex: 1; display: flex; flex-direction: column; gap: 16px; padding: 11px 0 0 4px; }
.wrap .small { gap: 3px; }
.wrap .chev { margin-left: 12px; }
.number .rows { padding-left: 8px; }
.number .second { gap: 5px; }
.sign { font-size: 18px; width: 22px; text-align: center; color: #999; }
.comma { fill: #999; margin: 0 8px; }
.dec { margin-right: 10px; }
.styles .tools { gap: 6px; }
.cells .tools { gap: 11px; }
.editing .tools { justify-content: flex-start; padding-left: 12px; gap: 9px; }
.editing .stack { width: 98px; }
.editing .small:first-child .chev { margin-left: auto; }
.collapse { margin-left: auto; align-self: flex-end; padding: 0 9px 6px; }

/* formula bar */
.formula { display: flex; align-items: center; gap: 8px; padding: 8px; height: 40px; flex: none; }
.namebox, .fx, .entry {
  height: 25px;
  display: flex;
  align-items: center;
  background: #fff;
  border: 1px solid #d0d0d0;
  border-radius: 4px;
  padding: 0 6px;
}
.namebox { width: 102px; }
.namebox input, .entry input { flex: 1; min-width: 0; border: 0; background: none; padding: 0; outline: 0; }
.fx { width: 86px; justify-content: space-between; padding: 0 2px 0 6px; }
.fx .ic { font: italic bold 18px/20px "Liberation Serif", serif; color: #333; }
.entry { flex: 1; margin-left: -3px; padding-right: 3px; }

/* grid */
.sheet { flex: 1; min-height: 0; display: flex; border-bottom: 1px solid #d8d8d8; }
.vscroll { width: 22px; display: flex; flex-direction: column; align-items: center; padding: 4px 2px 3px 0; gap: 5px; }
.vscroll .thumb { width: 8px; height: 17px; border-radius: 4px; background: #666; }
.up, .down, .left, .right { border: 5px solid transparent; }
.up { border-top: 0; border-bottom: 8px solid #666; }
.down { border-bottom: 0; border-top: 8px solid #666; }
.left { border-left: 0; border-right: 8px solid #666; }
.right { border-right: 0; border-left: 8px solid #666; }
.vscroll .down { margin-top: auto; }
.viewport { flex: 1; min-width: 0; overflow: hidden; background: #fff; }
table { width: 100%; table-layout: fixed; border-collapse: separate; border-spacing: 0; }
.c-num { width: 22px; } .c-a { width: 39px; } .c-b { width: 142px; } .c-c { width: 161px; } .c-d { width: 378px; }
.c-e { width: 408px; } .c-f { width: 90px; } .c-h { width: 142px; } .c-i { width: 57px; }
th, td { padding: 0; white-space: nowrap; font-family: "DejaVu Sans", sans-serif; }
th { font: 12px/14px "Open Sans", sans-serif; color: #444; background: #efefef; }
thead th { height: 16px; line-height: 15px; border-left: 1px solid #d8d8d8; border-bottom: 1px solid #999; }
th.sel { background: #e0e0e0; color: #217346; }
.corner { background: linear-gradient(45deg, #ccc 50%, transparent 50%) 3px 5px / 8px 8px no-repeat #efefef; }
tbody th { vertical-align: bottom; border-left: 1px solid #999; border-bottom: 1px solid #d8d8d8; }
tbody th.sel { border-left: 2px solid #217346; }
td { text-align: center; border-left: 1px solid #e0e0e0; border-bottom: 1px solid #e0e0e0; }
td.pane { border-left-color: #999; }
td:last-child { border-left: 0; }
.r1 > * { height: 33px; }
.r2 > * { height: 48px; }
.r3 > * { height: 15px; line-height: 13px; }
.r4 > * { height: 33px; }
.r3 td { border-bottom: 2px solid #000; }
td.head {
  background: #b4c6e7;
  color: #000;
  border-left: 2px solid #000;
  font-size: 17px;
  line-height: 28px;
  font-weight: bold;
}
.r1 .head:nth-child(5) { border-right: 2px solid #000; }
.r4 td { border-bottom: 2px solid #000; }
.r4 td:last-child { border-left: 0; }
.mark { background: #fff2cc; border-left: 2px solid #000; font-size: 12px; }
.scope { background: #c49e84; color: #7b2c00; font-size: 20px; font-style: italic; position: relative; }
.kind { background: #c6e0b4; position: relative; }
.r2 .scope { border-left: 2px solid #000; }
.selection { position: absolute; right: 0; top: -2px; bottom: -1px; width: 787px; border: 2px solid #217346; outline: 1px solid #fff; outline-offset: -3px; z-index: 1; }
.data > * { height: 26px; }
.data td {
  border-left: 1px solid #000;
  border-bottom: 0;
  background-image: repeating-linear-gradient(90deg, #000 0 9px, transparent 9px 12px, #000 12px 15px, transparent 15px 18px);
  background-size: 100% 1px;
  background-position: 0 100%;
  background-repeat: no-repeat;
}
.data td.pane { border-left-color: #999; }
.data td.end { border-left: 0; }
.data .city { background-color: #fce4d6; color: #c65911; font-size: 13px; }
.data .type { background-color: #e2efda; color: #548235; font-size: 11px; font-weight: bold; }
.company { font-size: 12px; color: #000; }
.shrink { font-size: 11px; }
.data .work { font-size: 10px; color: #000; text-align: right; padding: 0 2px 2px 0; }
.phone { font: 14px/16px "Liberation Serif", serif; color: #000; }

/* validation list */
.arrow {
  position: absolute;
  left: -18px;
  bottom: 0;
  width: 17px;
  height: 17px;
  display: flex;
  align-items: center;
  justify-content: center;
  background: #fafafa;
  border: 1px solid #aaa;
}
.arrow .down { border-width: 4px 3px 0; border-top-color: #555; }
.list {
  position: absolute;
  left: -18px;
  top: 48px;
  width: 427px;
  height: 206px;
  display: flex;
  direction: ltr;
  background: #fff;
  border: 1px solid #666;
  z-index: 2;
}
.list .bar { width: 17px; background: #f0f0f0; display: flex; flex-direction: column; align-items: center; padding: 4px 0 3px; }
.list .thumb { width: 15px; height: 66px; margin: 3px 0 auto; background: #ccc; }
.list select { flex: 1; border: 0; outline: 0; padding: 0; overflow: hidden; background: #fff; font: 11px/17px "DejaVu Sans", sans-serif; color: #222; }
.list option { height: 17px; min-height: 17px; padding: 2px 4px 0 3px; text-align: left; }
.list .active { background: #d8d8d8; }

/* sheet tabs */
.sheets { height: 31px; flex: none; display: flex; align-items: center; padding-left: 22px; }
.hscroll { width: 200px; height: 17px; display: flex; align-items: center; border-radius: 8px; background: #f6f6f6; padding: 0 4px; }
.hscroll .thumb { width: 110px; height: 9px; margin: 0 4px 0 auto; border-radius: 5px; background: #666; }
.dots { margin-left: 15px; }
.add { margin-left: auto; margin-right: 42px; }
.tab { height: 19px; padding: 0 13px; font-size: 14px; border-left: 1px solid #ccc; border-right: 1px solid #ccc; display: flex; align-items: center; gap: 6px; }
.tab.on {
  align-self: flex-start;
  height: 27px;
  margin-left: 3px;
  padding: 0 9px 4px;
  border: 0;
  border-radius: 0 0 4px 4px;
  background: linear-gradient(#107c41, #107c41) center 22px / 136px 2px no-repeat #fff;
  box-shadow: 0 1px 2px rgba(0, 0, 0, .2);
  font-weight: bold;
}
.tab .ar { font-size: 13px; }
.tab.on .ar { font-size: 12px; }
.move { width: 117px; display: flex; justify-content: flex-end; gap: 25px; padding-right: 28px; fill: none; stroke: #888; }

/* status bar */
.status { height: 23px; flex: none; display: flex; align-items: center; padding: 0 7px 0 11px; gap: 15px; font-size: 11px; background: #f5f5f5; border-top: 1px solid #fff; }
.access { display: flex; gap: 4px; margin-left: 4px; font-weight: 600; }
.views { margin-left: auto; display: flex; }
.views .ic { width: 40px; height: 22px; justify-content: center; }
.views svg { fill: none; stroke: #333; }
.views .on { background: #dcdcdc; }
.zoom { display: flex; align-items: center; gap: 4px; font-size: 14px; margin-left: -10px; }
.zoom input { appearance: none; width: 102px; height: 1px; background: #666; }
.zoom input::-webkit-slider-thumb { appearance: none; width: 5px; height: 12px; background: #666; }

.watermark {
  position: absolute;
  left: 844px;
  bottom: 12px;
  width: 232px;
  display: flex;
  flex-direction: column;
  align-items: center;
  color: rgba(190, 190, 190, .5);
  font-weight: bold;
  z-index: 3;
}
.word { font: bold 64px/76px "DejaVu Sans", sans-serif; }
.site { font: bold 38px/44px "Liberation Sans", sans-serif; }

/* taskbar */
.taskbar { width: 74px; display: flex; flex-direction: column; justify-content: space-between; background: #1b1b1b; color: #fff; }
.apps button { width: 100%; height: 46px; margin-bottom: 1px; display: flex; align-items: center; justify-content: center; }
.apps button:first-child { height: 42px; }
.apps .run { border-right: 2px solid #76b9ed; }
.apps .on { background: #4a4a4a; }
.wa { margin-left: 10px; }
.tray { display: flex; flex-direction: column; align-items: center; padding-bottom: 12px; fill: none; stroke: #fff; }
.tray > svg:first-child { align-self: flex-start; margin-left: 13px; }
.icons { width: 100%; display: flex; align-items: center; gap: 8px; padding-left: 12px; margin-top: 9px; }
.icons.two { gap: 10px; margin-top: 8px; }
.lang { margin-top: 12px; font-size: 11px; }
.clock { margin-top: 20px; font-size: 11px; line-height: 17px; text-align: center; }
.note { margin: 17px 0 0 6px; }
```
